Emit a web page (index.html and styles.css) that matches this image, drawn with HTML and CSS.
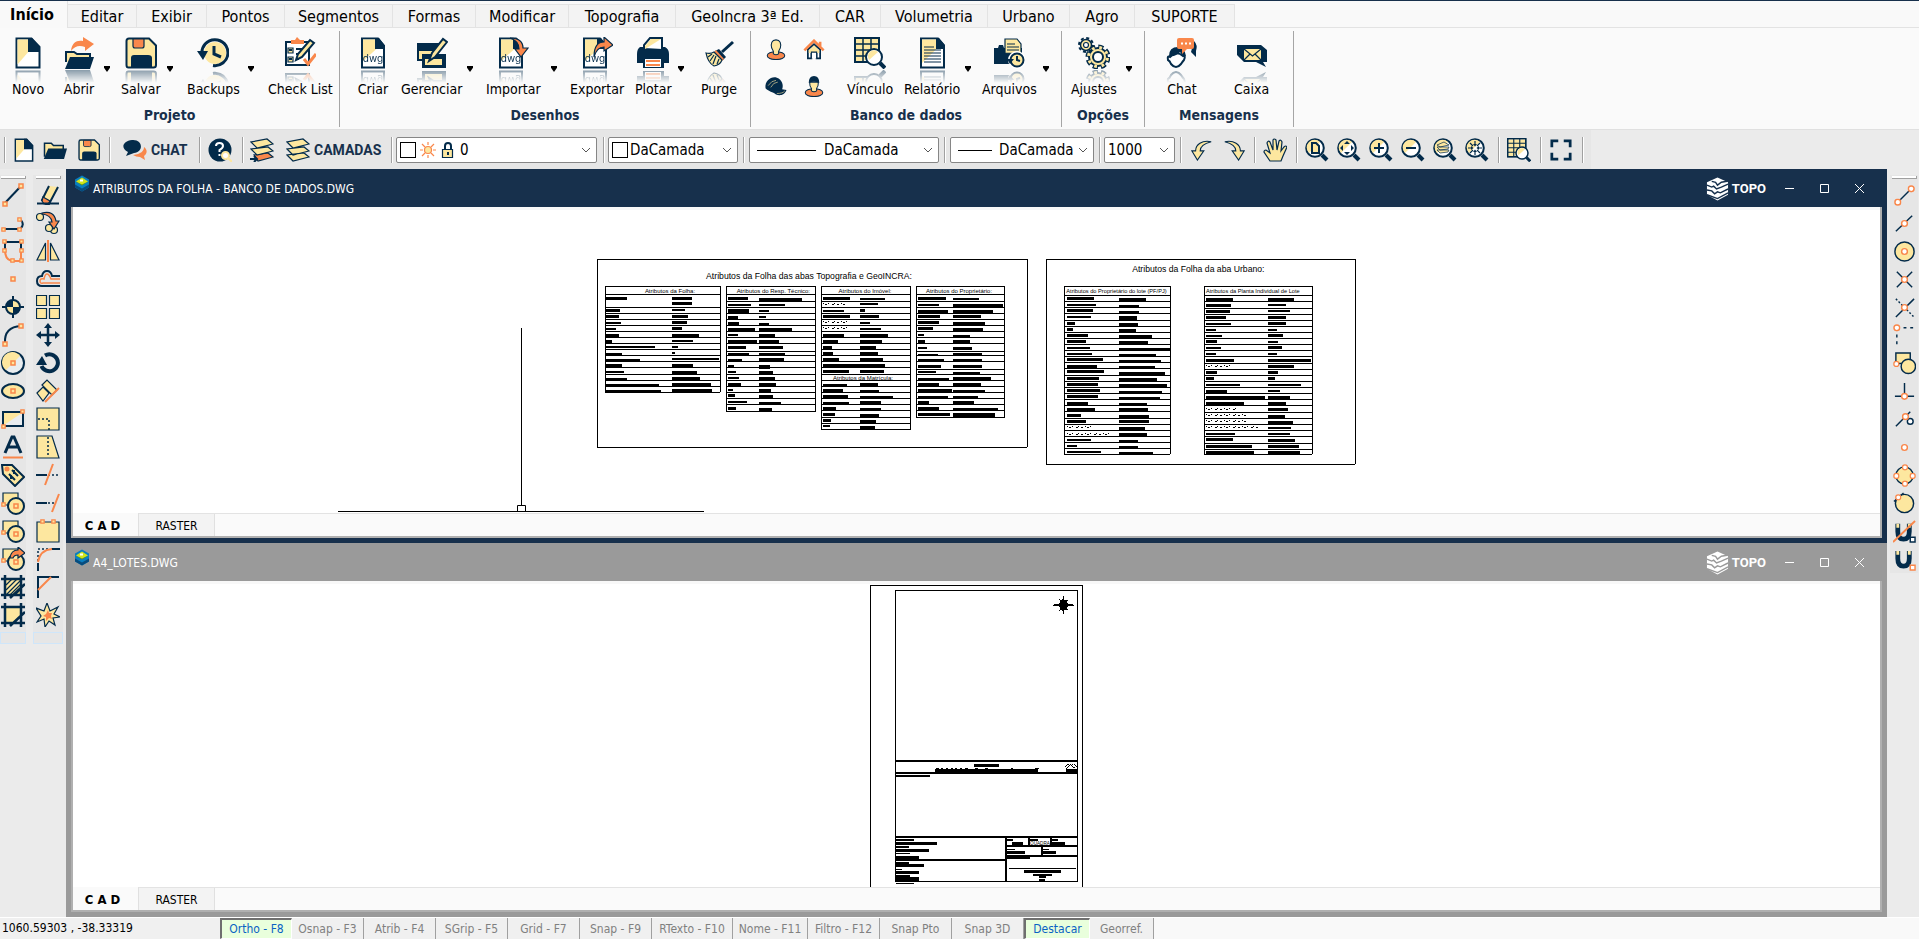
FILE: index.html
```html
<!DOCTYPE html>
<html lang="pt-BR">
<head>
<meta charset="utf-8">
<title>TOPO</title>
<link rel="stylesheet" href="styles.css">
</head>
<body>
<svg class="sprite" aria-hidden="true">
  <symbol id="doc" viewBox="0 0 32 32"><path class="w sn s2" d="M4.500 1.500h15l8 8.500v20.500h-23z"/><path class="y" d="M5.500 2.500h12v11l-12 14z"/><path class="n" d="M16 1h4l8 9v5H16z"/></symbol>
  <symbol id="folder" viewBox="0 0 32 32"><path class="y sn s2" d="M2 25V7h9l3 3h13v6"/><path class="n" d="M7 14h25l-4 14H1z"/></symbol>
  <symbol id="open" viewBox="0 0 32 32"><path class="o" d="M8 14C9 5 14 3 20 4V0l11 7-9 7v-4C16 8 12 9 8 14z"/><path class="y sn s2" d="M3 25V15h8l3 2h13v4"/><path class="n" d="M7 20h24l-4 12H2z"/></symbol>
  <symbol id="save" viewBox="0 0 32 32"><path class="y sn s2" d="M4 1.500h20l7 7V28q0 2.500-2.500 2.500h-25Q1.500 30.500 1.500 28V4q0-2.500 2.500-2.500z"/><path class="o sn s1" d="M8 2h11v7q0 2-2 2h-7q-2 0-2-2z"/><path class="n" d="M6 31V21q0-3 3-3h14q4 0 4 3v10z"/></symbol>
  <symbol id="clock" viewBox="0 0 32 32"><circle class="y" cx="18" cy="16" r="11"/><path class="f sn s3" d="M5 17A13 13 0 1 1 16 28.500"/><path class="n" d="M0 14h11l-5 9z"/><path class="f sn s3" d="M17 9v8l7 3"/></symbol>
  <symbol id="check" viewBox="0 0 32 32"><path class="w sn s2" d="M2 5h23v23H2z"/><path class="o" d="M7 7V3h4l2-3 3 3h4v4z"/><path class="y sn s1" d="M4 11h5v5H4zM4 20h5v5H4z"/><path class="f sn s2" d="M12 12h7M12 17h4M12 22h3M5 13h3M5 22h3"/><path class="y sn s2" d="M12 23l2-6L26 3l4 3-12 14z"/><path class="f so s3" d="M20 22l4 5 8-10"/></symbol>
  <symbol id="dwg" viewBox="0 0 32 32"><path class="w sn s2" d="M5 1.500h16l6 7v22H5z"/><path class="y" d="M6 2.500h14v9L6 24z"/><path class="n" d="M18 1h4l6 8v3H18z"/><text class="dwgt" x="16" y="25">dwg</text></symbol>
  <symbol id="imp" viewBox="0 0 32 32"><use href="#dwg" width="32" height="32" x="-2"/><path class="o sn s1" d="M13 1c9 0 13 4 13 10h5l-7 9-6-8h4c0-6-3-9-9-11z"/></symbol>
  <symbol id="exp" viewBox="0 0 32 32"><use href="#dwg" width="32" height="32" x="-2"/><path class="o sn s1" d="M13 20C13 9 17 5 23 5V0l9 8-9 6v-4c-5 0-8 3-10 10z"/></symbol>
  <symbol id="manage" viewBox="0 0 32 32"><path class="n" d="M1 6h22v8H1z"/><path class="y sn s2" d="M2 13h18v10H2z"/><path class="n" d="M6 17h24v14H6z"/><path class="y" d="M9 22h17v6H9z"/><path class="y sn s2" d="M13 24l3-8L27 2l4 3-12 15z"/></symbol>
  <symbol id="print" viewBox="0 0 32 32"><path class="w sn s2" d="M7 12V8l6-7h12v12z"/><path class="y" d="M8 12V9l6-7h10z"/><path class="n" d="M3 10h5v3h16v-3h4q4 2 4 7v9h-5v5H6v-5H0v-9q0-5 3-7z"/><path class="w" d="M8 22h16v8H8z"/><path class="f so s2" d="M9 24h14M9 28h14"/></symbol>
  <symbol id="broom" viewBox="0 0 32 32"><path class="f sn s3" d="M30 5L19 15"/><path class="n" d="M16 12l7 8-3 3-8-9z"/><path class="o" d="M13 13l8 9-2 2-8-9z"/><path class="y sn s1" d="M11 15l8 8q-2 5-8 6Q5 26 3 16q5 1 8-1z"/><path class="f sn s1" d="M5 20l4-3M7 24l4-6M10 27l3-8M14 27l2-5"/></symbol>
  <symbol id="user" viewBox="0 0 24 24"><ellipse class="o sn s1" cx="12" cy="19" rx="10" ry="4.500"/><path class="y sn s1" d="M12 1c5 0 6 4 5 9l-2 4v3q-3 2-6 0v-3l-2-4c-1-5 0-9 5-9z"/></symbol>
  <symbol id="house" viewBox="0 0 24 24"><path class="w sn s2" d="M5 22V12l7-6 7 6v10h-4v-6H9v6z"/><path class="y" d="M6 13l6-6 6 6v3H6z"/><path class="w sn s1" d="M9 22v-7h6v7"/><path class="f so s3" d="M1 13L12 2l11 11M19 3v5"/></symbol>
  <symbol id="cap" viewBox="0 0 24 24"><path class="n" d="M0 14C-1 5 7 0 13 2c6 2 8 9 6 13l5 1c-2 6-8 7-12 5C8 18 4 18 0 14z"/><path class="f sy s05" d="M3 11Q7 5 12 5M6 13q3-6 8-6M13 20q7 0 9-3"/></symbol>
  <symbol id="worker" viewBox="0 0 24 24"><ellipse class="o sn s1" cx="12" cy="19" rx="10" ry="4.500"/><path class="y sn s1" d="M7 7h10q0 5-2 7v3q-3 2-6 0v-3q-2-2-2-7z"/><path class="n" d="M6 8Q6 0 12 0t6 8q-6-3-12 0z"/></symbol>
  <symbol id="table" viewBox="0 0 32 32"><path class="w sn s2" d="M1 1h24v24H1z"/><path class="y" d="M2 2h22v9L10 24H2z"/><path class="f sn s15" d="M1 7h24M1 13h24M1 19h24M9 1v24M17 1v24M1 1h24v24H1z"/><path class="f sn s4" d="M26 26l5 5"/><circle class="w sn s2" cx="20" cy="20" r="8"/><path class="y" d="M14 20a6 6 0 0 1 10-5l-9 8z"/></symbol>
  <symbol id="report" viewBox="0 0 32 32"><path class="w sn s2" d="M5 1.500h17l6 7v22H5z"/><path class="y" d="M6 2.500h15v9L6 26z"/><path class="n" d="M20 1h3l6 7v4h-9z"/><path class="f sn s1" d="M8 13h17M8 16h17M8 19h17M8 22h17M8 25h17M8 10h10"/></symbol>
  <symbol id="files" viewBox="0 0 32 32"><path class="n" d="M1 11h4l1-3h4l1 3h18v16H1z"/><path class="y sn s1" d="M12 16V2h12l4 5v10z"/><path class="f sn s1" d="M14 7h8M14 10h12M14 13h12"/><circle class="w" cx="24" cy="23" r="9"/><circle class="y sn s2" cx="24" cy="23" r="6.500"/><path class="f sn s2" d="M24 19v4l3 1"/><path class="n" d="M14 22h7l-4 5z"/></symbol>
  <symbol id="gears" viewBox="0 0 32 32"><circle class="f sn s2 tooth" cx="8" cy="8" r="7"/><circle class="y sn s15" cx="8" cy="8" r="5.500"/><circle class="w sn s1" cx="8" cy="8" r="2.500"/><circle class="f sn gear" cx="20" cy="20" r="10"/><circle class="y sn s2" cx="20" cy="20" r="9"/><circle class="f sy gear2" cx="20" cy="20" r="9.500"/><circle class="w sn s2" cx="20" cy="20" r="5"/></symbol>
  <symbol id="talk" viewBox="0 0 32 32"><path class="n" d="M28 4q4 4 2 10v6l-5-5z"/><path class="w sn s2" d="M4 20q-3-2-2 3 2 1 3 4 5 6 10 0 2-3 3-4 2-5-1-4-7-6-13 1z"/><path class="n" d="M3 19Q3 10 12 10q7 1 8 9-4 0-6-4-4 5-11 4z"/><path class="o" d="M13 1h13q2 0 2 2v7q0 2-2 2h-5l-5 5v-5h-3q-2 0-2-2V3q0-2 2-2z"/><path class="f sw dots" d="M15 6.500h10"/></symbol>
  <symbol id="mail" viewBox="0 0 32 32"><path class="n" d="M1 8h24l6 5v12h-4l3 5-10-5H8l-7-7z"/><path class="y" d="M8 12h17v11H8z"/><path class="f sn s1" d="M8 12l8.500 7 8.500-7M8 23l6-6M25 23l-6-6"/></symbol>

  <symbol id="bubbles" viewBox="0 0 24 24"><path class="n" d="M9 2c11-1 12 12 2 13l-8 3 2-4C-3 10 0 3 9 2z"/><path class="o" d="M21 9c4 3 3 7 0 9l1 4-5-3q-4 0-7-2c8-1 11-4 11-8z"/></symbol>
  <symbol id="help" viewBox="0 0 24 24"><circle class="n" cx="12" cy="12" r="11.500"/><path class="f sw s2" d="M8 8q0-3 3.500-3T15 8q0 2-3.500 4v2M11.500 16v2"/><circle class="w sy s2" cx="17.500" cy="17.500" r="3.500"/><path class="f sy s2" d="M20 20l4 4"/></symbol>
  <symbol id="layers" viewBox="0 0 24 24"><path class="y sn s1" d="M1 17l6 6 16-4-5-4zM1 11l6 6 16-4-5-4zM1 4l6 6 16-4-6-5z"/></symbol>
  <symbol id="layersel" viewBox="0 0 24 24"><path class="o sn s1" d="M4 17l4 6 15-4-5-4z"/><path class="y sn s1" d="M1 11l6 6 16-4-5-4zM1 4l6 6 16-4-6-5z"/><path class="f sn s2" d="M0 21h6M4 18l3 3-3 3"/></symbol>
  <symbol id="sun" viewBox="0 0 16 16"><circle class="y so s1" cx="8" cy="8" r="3.500"/><path class="f so s1" d="M8 0v3M8 13v3M0 8h3M13 8h3M2 2l3 3M11 11l3 3M14 2l-3 3M5 11l-3 3"/></symbol>
  <symbol id="lock" viewBox="0 0 16 16"><path class="f sn s2" d="M5 8V4q0-3 3-3t3 3v3"/><path class="y sn s1" d="M2.500 7.500h10v8h-10z"/><path class="n" d="M7 10h2v3H7z"/></symbol>
  <symbol id="chev" viewBox="0 0 10 10"><path d="M1 3l4 4 4-4" fill="none" stroke="#555"/></symbol>
  <symbol id="undo" viewBox="0 0 24 24"><path class="y sn s1" d="M22 3C12 1 5 6 5 13H1l6 10 7-10h-4c0-5 4-8 12-10z"/></symbol>
  <symbol id="redo" viewBox="0 0 24 24"><path class="y sn s1" d="M2 3c10-2 17 3 17 10h4l-6 10-7-10h4c0-5-4-8-12-10z"/></symbol>
  <symbol id="hand" viewBox="0 0 24 24"><path class="y sn s1" d="M7 23L1 14q0-2 2-2l4 3L4 5q1-3 3-1l3 8V2q1-2 3 0l1 10 2-9q2-2 3 1l-1 9 3-4q2-2 3 0l-4 9-2 5z"/></symbol>
  <symbol id="lens" viewBox="0 0 24 24"><path class="f sn s4" d="M17 17l5 5"/><circle class="w sn s2" cx="10" cy="10" r="8.800"/><path class="y" d="M4 15A7.600 7.600 0 0 1 15 4z"/></symbol>
  <symbol id="zdoc" viewBox="0 0 24 24"><use href="#lens" width="24" height="24"/><path class="y sn s2" d="M7 5h4l3 3v7H7z"/></symbol>
  <symbol id="zext" viewBox="0 0 24 24"><use href="#lens" width="24" height="24"/><path class="n" d="M10 3l3 3H7zM10 17l3-3H7zM3 10l3-3v6zM17 10l-3-3v6z"/></symbol>
  <symbol id="zin" viewBox="0 0 24 24"><use href="#lens" width="24" height="24"/><path class="f sn s2" d="M5 10h10M10 5v10"/></symbol>
  <symbol id="zout" viewBox="0 0 24 24"><use href="#lens" width="24" height="24"/><path class="f sn s2" d="M5 10h10"/></symbol>
  <symbol id="zlay" viewBox="0 0 24 24"><use href="#lens" width="24" height="24"/><path class="y sn s05" d="M4 12l3 3 8-1 1-2zM4 9l3 3 8-1 1-2zM4 7l3 2 9-2-5-3z"/></symbol>
  <symbol id="zcen" viewBox="0 0 24 24"><use href="#lens" width="24" height="24"/><path class="f sn s1" d="M10 3v4M10 13v4M3 10h4M13 10h4M5 5l3 3M15 5l-3 3M5 15l3-3M15 15l-3-3"/><path class="n" d="M10 8.500L8 6h4zM10 11.500L8 14h4zM8.500 10L6 8v4zM11.500 10L14 8v4z"/></symbol>
  <symbol id="full" viewBox="0 0 24 24"><path class="f sn s3" d="M2 9V2h7M15 2h7v7M22 15v7h-7M9 22H2v-7"/></symbol>

  <symbol id="hs" viewBox="0 0 6 6"><path class="y so s15" d="M1 1h4v4H1z"/></symbol>
  <symbol id="hr" viewBox="0 0 8 8"><circle class="w so s15" cx="4" cy="4" r="3"/></symbol>
  <symbol id="line" viewBox="0 0 24 24"><path class="f sn s2" d="M4 20L20 3"/><use href="#hs" x="1" y="18" width="6" height="6"/><use href="#hs" x="17" y="0" width="6" height="6"/></symbol>
  <symbol id="pline" viewBox="0 0 24 24"><path class="f sn s2" d="M3 18h16q5-4 1-9"/><use href="#hs" x="0" y="16" width="5" height="5"/><use href="#hs" x="16" y="16" width="5" height="5"/><use href="#hs" x="16" y="6" width="5" height="5"/></symbol>
  <symbol id="poly" viewBox="0 0 24 24"><path class="f so s2" d="M4 11q0 11 9 11h7V11"/><path class="f sn s2" d="M4 11V3h16v8"/><use href="#hs" x="1" y="0" width="5" height="5"/><use href="#hs" x="18" y="0" width="5" height="5"/><use href="#hs" x="1" y="9" width="5" height="5"/><use href="#hs" x="18" y="9" width="5" height="5"/><use href="#hs" x="18" y="19" width="5" height="5"/><use href="#hs" x="9" y="19" width="5" height="5"/></symbol>
  <symbol id="point" viewBox="0 0 24 24"><use href="#hs" x="9" y="9" width="6" height="6"/></symbol>
  <symbol id="target" viewBox="0 0 24 24"><path class="f sn s2" d="M12 1v22M1 12h22"/><circle class="y sn s2" cx="12" cy="12" r="7"/><path class="n" d="M12 12V5a7 7 0 0 0-7 7zM12 12v7a7 7 0 0 0 7-7z"/></symbol>
  <symbol id="arc" viewBox="0 0 24 24"><path class="f sn s2" d="M4 20Q3 4 20 3"/><use href="#hs" x="1" y="18" width="6" height="6"/><use href="#hs" x="17" y="0" width="6" height="6"/></symbol>
  <symbol id="circle" viewBox="0 0 24 24"><circle class="lt sn s2" cx="12" cy="12" r="11"/><path class="y" d="M5 19A10 10 0 1 1 19 5z"/><use href="#hs" x="9" y="9" width="6" height="6"/></symbol>
  <symbol id="ellipse" viewBox="0 0 24 24"><ellipse class="y sn s2" cx="12" cy="12" rx="11" ry="7"/><use href="#hs" x="9" y="9" width="6" height="6"/></symbol>
  <symbol id="rect" viewBox="0 0 24 24"><path class="lt sn s2" d="M2 5h20v14H2z"/><path class="y" d="M3 6h18L3 18z"/><use href="#hs" x="0" y="17" width="5" height="5"/><use href="#hs" x="19" y="2" width="5" height="5"/></symbol>
  <symbol id="text" viewBox="0 0 24 24"><path class="f sn s3" d="M4 18L11 2h2l7 16M7 12h10"/><path class="f so s2" d="M2 22.500h20"/></symbol>
  <symbol id="tag" viewBox="0 0 24 24"><path class="y sn s2" d="M1 2l10 0 12 12-9 9L2 11z"/><circle class="o" cx="6" cy="6" r="2.500"/><path class="f sn s2" d="M11 7l6 6M8 11l6 6M13 7v4M10 12v4"/></symbol>
  <symbol id="shapes" viewBox="0 0 24 24"><path class="y sn s1" d="M2 2h15v12H2z"/><use href="#hs" x="0" y="11" width="5" height="5"/><circle class="y sn s2" cx="15" cy="15" r="8"/><use href="#hs" x="12" y="12" width="6" height="6"/></symbol>
  <symbol id="shapes2" viewBox="0 0 24 24"><use href="#shapes" width="24" height="24"/><path class="o sn s1" d="M9 11q1-8 8-8V0l7 6-7 5V8q-4 0-5 3z"/></symbol>
  <symbol id="hatch" viewBox="0 0 24 24"><path class="y" d="M5 4h16v15l-2 2H5z"/><path class="f sn s1" d="M5 10l6-6M5 15L16 4M5 20L20 5M9 20L20 9M14 20l6-6"/><path class="f sn s25" d="M4 0v24M20 0v24M0 4h24M0 20h24M24 9L9 23"/></symbol>
  <symbol id="bound" viewBox="0 0 24 24"><path class="y" d="M5 4h16v7l-9 9H5z"/><path class="f sn s25" d="M4 0v24M20 0v24M0 4h24M0 20h24M24 9L9 23"/></symbol>

  <symbol id="erase" viewBox="0 0 24 24"><path class="y sn s2" d="M13 3L6 17l4 4h3L22 4"/><path class="o sn s1" d="M7 14l7 4-2 3H8l-2-3z"/><path class="f sn s2" d="M1 20.500h22"/></symbol>
  <symbol id="copy" viewBox="0 0 24 24"><circle class="y sn s1" cx="4" cy="6" r="3.500"/><circle class="y sn s1" cx="18" cy="19" r="3.500"/><circle class="y sn s1" cx="13" cy="17" r="3.500"/><path class="o sn s1" d="M6 2q12-3 14 8h3l-5 8-5-7h3Q15 4 6 3z"/></symbol>
  <symbol id="mirror" viewBox="0 0 24 24"><path class="y sn s1" d="M9.500 4v17H1zM14.500 4v17H23z"/><path class="f so s2" d="M12 1v22"/></symbol>
  <symbol id="offset" viewBox="0 0 24 24"><path class="f sn s2" d="M24 9h-8q-1-5-5-5T6 9q-5 0-5 5t5 5h18"/><path class="f so s15" d="M24 12h-9q-2-5-4-5t-3 5q-4-1-4 2t3 2h17"/></symbol>
  <symbol id="array" viewBox="0 0 24 24"><path class="y sn s1" d="M.5.5h10v10H.5zM13.500.5h10v10h-10zM.5 13.500h10v10H.5zM13.500 13.500h10v10h-10z"/></symbol>
  <symbol id="move" viewBox="0 0 24 24"><path class="f sn s25" d="M12 3v18M3 12h18"/><path class="n" d="M12 0l4 5H8zM12 24l4-5H8zM0 12l5-4v8zM24 12l-5-4v8z"/></symbol>
  <symbol id="rotate" viewBox="0 0 24 24"><path class="f sn s4" d="M9 4.500A8.500 8.500 0 1 1 5.500 15"/><path class="n" d="M0 14h11L6 5z"/></symbol>
  <symbol id="align" viewBox="0 0 24 24"><path class="y sn s1" d="M6 6l5-5 10 10-5 5zM1 14l6-6 6 6-6 8z"/><path class="f so s2" d="M9 23L23 9"/></symbol>
  <symbol id="scale" viewBox="0 0 24 24"><path class="y sn s1" d="M1 1h22v22H1z"/><path class="f sn s15 dash" d="M2 12h11v11"/></symbol>
  <symbol id="stretch" viewBox="0 0 24 24"><path class="y sn s1" d="M1 1h15l7 22H1z"/><path class="f sn s15 dash" d="M12 2v20"/></symbol>
  <symbol id="trim" viewBox="0 0 24 24"><path class="f sn s2" d="M0 12h11"/><path class="f sn s15 dash" d="M12 12h12"/><path class="f so s2" d="M17 1L9 22"/></symbol>
  <symbol id="extend" viewBox="0 0 24 24"><path class="f sn s2" d="M0 12h11"/><path class="f sn s15 dash" d="M12 12h8"/><path class="f so s2" d="M23 3l-7 18"/></symbol>
  <symbol id="break" viewBox="0 0 24 24"><path class="y sn s1" d="M1 3h22v20H1z"/><use href="#hs" x="4" y="0" width="5" height="5"/><use href="#hs" x="15" y="0" width="5" height="5"/></symbol>
  <symbol id="fillet" viewBox="0 0 24 24"><path class="f sn s15 dash" d="M2 14V2h12"/><path class="f sn s2" d="M2 24v-8M15 2h9"/><path class="f so s2" d="M2 15Q4 3 16 2"/></symbol>
  <symbol id="chamfer" viewBox="0 0 24 24"><path class="f sn s2" d="M2 23V2h21"/><path class="f so s2" d="M2 15L15 2"/></symbol>
  <symbol id="explode" viewBox="0 0 24 24"><path class="y sn s1" d="M11 0l3 8 8-4-4 7 6 3-7 1 2 7-6-4-4 6-1-8-7 3 4-6-5-8 8 3z"/><path class="o" d="M12 7l1 3 3 0-1 3 1 3-3-1-3 3 0-4-3-1 3-2z"/></symbol>

  <symbol id="oend" viewBox="0 0 24 24"><path class="f sn s15" d="M5 19L19 5"/><use href="#hr" x="1" y="15" width="8" height="8"/><use href="#hr" x="15" y="1" width="8" height="8"/></symbol>
  <symbol id="omid" viewBox="0 0 24 24"><path class="f sn s15" d="M3 20L20 4"/><use href="#hr" x="8" y="8" width="8" height="8"/></symbol>
  <symbol id="ocen" viewBox="0 0 24 24"><circle class="y sn s15" cx="12" cy="12" r="10"/><use href="#hr" x="8" y="8" width="8" height="8"/></symbol>
  <symbol id="oint" viewBox="0 0 24 24"><path class="f sn s15" d="M4 20L20 4M4 4l16 16"/><use href="#hr" x="8" y="8" width="8" height="8"/></symbol>
  <symbol id="oapp" viewBox="0 0 24 24"><path class="f sn s15" d="M3 22L22 3"/><path class="f sn s15 dash" d="M3 3l19 19"/><use href="#hr" x="8" y="8" width="8" height="8"/></symbol>
  <symbol id="oext" viewBox="0 0 24 24"><path class="f sn s15 dash wide" d="M4 4h20M4 4v20"/><use href="#hr" x="0" y="0" width="8" height="8"/></symbol>
  <symbol id="oins" viewBox="0 0 24 24"><path class="y sn s15" d="M3 1h15v11H3z"/><circle class="y sn s15" cx="16" cy="15" r="7.500"/><use href="#hr" x="0" y="9" width="7" height="7"/></symbol>
  <symbol id="oper" viewBox="0 0 24 24"><path class="f sn s15" d="M12 3v14M2 17h20"/><use href="#hr" x="8" y="13" width="8" height="8"/></symbol>
  <symbol id="onea" viewBox="0 0 24 24"><path class="f sn s15" d="M3 19L18 4"/><circle class="w sn s15" cx="18" cy="14" r="3"/><use href="#hr" x="9" y="5" width="8" height="8"/></symbol>
  <symbol id="onod" viewBox="0 0 24 24"><use href="#hr" x="8" y="8" width="8" height="8"/></symbol>
  <symbol id="oqua" viewBox="0 0 24 24"><circle class="y sn s15" cx="12" cy="12" r="9"/><use href="#hr" x="9" y="0" width="7" height="7"/><use href="#hr" x="9" y="17" width="7" height="7"/><use href="#hr" x="0" y="9" width="7" height="7"/><use href="#hr" x="17" y="9" width="7" height="7"/></symbol>
  <symbol id="otan" viewBox="0 0 24 24"><circle class="y sn s15" cx="12" cy="12" r="9.500"/><path class="f sn s15" d="M1 10L11 1"/><use href="#hr" x="2" y="2" width="7" height="7"/></symbol>
  <symbol id="mag" viewBox="0 0 24 24"><path class="f sn s5" d="M6 2v8q0 8 6 8t6-8V2"/><path class="y" d="M4.500 2h3v4h-3zM16.500 2h3v4h-3z"/></symbol>
  <symbol id="magoff" viewBox="0 0 24 24"><use href="#mag" width="24" height="24" x="-1" y="2"/><path class="f so s2" d="M0 23L23 1"/><path class="w sn s15" d="M18 18h5v5h-5z"/></symbol>
  <symbol id="magon" viewBox="0 0 24 24"><use href="#mag" width="24" height="24" x="-1" y="1"/><path class="w so s15" d="M18 18h5v5h-5z"/></symbol>
  <symbol id="app" viewBox="0 0 16 16"><path fill="#0a7fc0" d="M8 0l7 4v8l-7 4-7-4V4z"/><path fill="#084c7d" d="M1 9l7 4 7-4v3l-7 4-7-4z"/><path fill="#5f8f10" d="M2 6l6 4 6-4-3 1H5z"/><path fill="#cfe51c" d="M8 2l6 4-6 3-6-3z"/><path fill="#fff" d="M6 4h3v2H6z"/></symbol>
  <symbol id="topo" viewBox="0 0 24 24"><path class="w" d="M12 0l11 5v13l-11 6-11-6V5z"/><path d="M1 8l5 2 2-1 3 3 5-2 7-3M1 13l5 1 3 3 3-2 3 1 8-4M1 18l11 4 11-6M6 4l4 1 2 3 4-3 6-1" fill="none" stroke="currentColor" stroke-width="1.500"/></symbol>
</svg>

<nav class="tabs" aria-label="Menu">
  <button class="tab on">Início</button><button class="tab">Editar</button><button class="tab">Exibir</button><button class="tab">Pontos</button><button class="tab">Segmentos</button><button class="tab">Formas</button><button class="tab">Modificar</button><button class="tab">Topografia</button><button class="tab">GeoIncra 3ª Ed.</button><button class="tab">CAR</button><button class="tab">Volumetria</button><button class="tab">Urbano</button><button class="tab">Agro</button><button class="tab">SUPORTE</button>
</nav>

<section class="ribbon">
  <div class="group"><div class="tools g1">
    <button class="tool"><svg><use href="#doc"/></svg>Novo</button>
    <button class="tool"><svg><use href="#open"/></svg>Abrir</button><button class="drop" aria-label="Mais"></button>
    <button class="tool"><svg><use href="#save"/></svg>Salvar</button><button class="drop" aria-label="Mais"></button>
    <button class="tool"><svg><use href="#clock"/></svg>Backups</button><button class="drop" aria-label="Mais"></button>
    <button class="tool"><svg><use href="#check"/></svg>Check List</button>
  </div><h2>Projeto</h2></div>
  <div class="group"><div class="tools g2">
    <button class="tool"><svg><use href="#dwg"/></svg>Criar</button>
    <button class="tool"><svg><use href="#manage"/></svg>Gerenciar</button><button class="drop" aria-label="Mais"></button>
    <button class="tool"><svg><use href="#imp"/></svg>Importar</button><button class="drop" aria-label="Mais"></button>
    <button class="tool"><svg><use href="#exp"/></svg>Exportar</button>
    <button class="tool"><svg><use href="#print"/></svg>Plotar</button><button class="drop" aria-label="Mais"></button>
    <button class="tool"><svg><use href="#broom"/></svg>Purge</button>
  </div><h2>Desenhos</h2></div>
  <div class="group"><div class="tools g3">
    <div class="minis">
      <button aria-label="Proprietário"><svg><use href="#user"/></svg></button><button aria-label="Imóvel"><svg><use href="#house"/></svg></button>
      <button aria-label="Responsável"><svg><use href="#cap"/></svg></button><button aria-label="Equipe"><svg><use href="#worker"/></svg></button>
    </div>
    <button class="tool"><svg><use href="#table"/></svg>Vínculo</button>
    <button class="tool"><svg><use href="#report"/></svg>Relatório</button><button class="drop" aria-label="Mais"></button>
    <button class="tool"><svg><use href="#files"/></svg>Arquivos</button><button class="drop" aria-label="Mais"></button>
  </div><h2>Banco de dados</h2></div>
  <div class="group"><div class="tools g4">
    <button class="tool"><svg><use href="#gears"/></svg>Ajustes</button><button class="drop" aria-label="Mais"></button>
  </div><h2>Opções</h2></div>
  <div class="group"><div class="tools g5">
    <button class="tool"><svg><use href="#talk"/></svg>Chat</button>
    <button class="tool"><svg><use href="#mail"/></svg>Caixa</button>
  </div><h2>Mensagens</h2></div>
</section>

<div class="quick"><div class="bar">
  <i class="sep"></i>
  <button aria-label="Novo"><svg><use href="#doc"/></svg></button>
  <button aria-label="Abrir"><svg><use href="#folder"/></svg></button>
  <button class="sm" aria-label="Salvar"><svg><use href="#save"/></svg></button>
  <i class="sep"></i>
  <button class="word"><svg><use href="#bubbles"/></svg>CHAT</button>
  <i class="sep"></i>
  <button aria-label="Ajuda"><svg><use href="#help"/></svg></button>
  <i class="sep"></i>
  <button aria-label="Camada atual"><svg><use href="#layersel"/></svg></button>
  <button class="word"><svg><use href="#layers"/></svg>CAMADAS</button>
  <i class="sep"></i>
  <label class="combo c1"><i class="swatch"></i><svg><use href="#sun"/></svg><svg><use href="#lock"/></svg><select aria-label="Camada"><option>0</option></select><svg class="chev"><use href="#chev"/></svg></label>
  <i class="sep"></i>
  <label class="combo c2"><i class="swatch"></i><select aria-label="Cor"><option>DaCamada</option></select><svg class="chev"><use href="#chev"/></svg></label>
  <i class="sep"></i>
  <label class="combo c3"><i class="stroke"></i><select aria-label="Tipo de linha"><option>DaCamada</option></select><svg class="chev"><use href="#chev"/></svg></label>
  <i class="sep"></i>
  <label class="combo c4"><i class="stroke"></i><select aria-label="Espessura"><option>DaCamada</option></select><svg class="chev"><use href="#chev"/></svg></label>
  <i class="sep"></i>
  <label class="combo c5"><select aria-label="Escala"><option>1000</option></select><svg class="chev"><use href="#chev"/></svg></label>
  <i class="sep"></i>
  <button class="sm" aria-label="Desfazer"><svg><use href="#undo"/></svg></button>
  <button class="sm" aria-label="Refazer"><svg><use href="#redo"/></svg></button>
  <i class="sep"></i>
  <button aria-label="Mover vista"><svg><use href="#hand"/></svg></button>
  <i class="sep"></i>
  <button aria-label="Zoom folha"><svg><use href="#zdoc"/></svg></button>
  <button aria-label="Zoom extensão"><svg><use href="#zext"/></svg></button>
  <button aria-label="Mais zoom"><svg><use href="#zin"/></svg></button>
  <button aria-label="Menos zoom"><svg><use href="#zout"/></svg></button>
  <button aria-label="Zoom camada"><svg><use href="#zlay"/></svg></button>
  <button aria-label="Zoom centro"><svg><use href="#zcen"/></svg></button>
  <i class="sep"></i>
  <button aria-label="Tabela"><svg><use href="#table"/></svg></button>
  <i class="sep"></i>
  <button class="sm" aria-label="Tela cheia"><svg><use href="#full"/></svg></button>
  <i class="sep"></i>
</div></div>

<main class="work">
  <aside class="side left">
    <div class="strip" data-icons="line pline poly point target arc circle ellipse rect text tag shapes shapes shapes2 hatch bound"><i class="grip"></i></div>
    <div class="strip" data-icons="erase copy mirror offset array move rotate align scale stretch trim extend break fillet chamfer explode"><i class="grip"></i></div>
  </aside>
  <div class="mdi">
    <section class="win active">
      <header><svg class="app"><use href="#app"/></svg><h1>ATRIBUTOS DA FOLHA - BANCO DE DADOS.DWG</h1><span class="brand"><svg><use href="#topo"/></svg>TOPO</span>
        <button aria-label="Minimizar"><svg viewBox="0 0 9 9"><path d="M0 4.500h9"/></svg></button><button aria-label="Maximizar"><svg viewBox="0 0 9 9"><path d="M.5.5h8v8h-8z"/></svg></button><button aria-label="Fechar"><svg viewBox="0 0 9 9"><path d="M0 0l9 9M9 0L0 9"/></svg></button></header>
      <div class="body">
        <svg class="canvas">
          <g transform="translate(-73 -210)">
            <path class="ln" d="M521.500 328v177M338 511.500h366"/><path class="ln" d="M517.500 505.500h8v6h-8z"/>
            <g id="sheet1" class="cad" transform="translate(590 250) scale(.333333)">
              <text x="657" y="86" class="t1">Atributos da Folha das abas Topografia e GeoINCRA:</text>
              <text x="240" y="129">Atributos da Folha:</text><text x="550" y="129">Atributos do Resp. Técnico:</text><text x="825" y="129">Atributos do Imóvel:</text><text x="1107" y="129">Atributos do Proprietário:</text><text x="819" y="391">Atributos da Matrícula:</text>
            </g>
            <g id="sheet2" class="cad" transform="translate(1030 250) scale(.333333)">
              <text x="505" y="65" class="t1">Atributos da Folha da aba Urbano:</text>
              <text x="109" y="129" class="ts">Atributos do Proprietário do lote (PF/PJ)</text><text x="528" y="129" class="ts">Atributos da Planta Individual de Lote</text>
            </g>
          </g>
        </svg>
        <div class="views"><button class="on">C A D</button><button>RASTER</button></div>
      </div>
    </section>
    <section class="win">
      <header><svg class="app"><use href="#app"/></svg><h1>A4_LOTES.DWG</h1><span class="brand"><svg><use href="#topo"/></svg>TOPO</span>
        <button aria-label="Minimizar"><svg viewBox="0 0 9 9"><path d="M0 4.500h9"/></svg></button><button aria-label="Maximizar"><svg viewBox="0 0 9 9"><path d="M.5.5h8v8h-8z"/></svg></button><button aria-label="Fechar"><svg viewBox="0 0 9 9"><path d="M0 0l9 9M9 0L0 9"/></svg></button></header>
      <div class="body">
        <svg class="canvas">
          <g transform="translate(-73 -584)"><g id="sheet3" class="cad" transform="translate(860 570) scale(.333333)"><text x="540" y="825" class="tq">QUADRA</text></g></g>
        </svg>
        <div class="views"><button class="on">C A D</button><button>RASTER</button></div>
      </div>
    </section>
  </div>
  <aside class="side right">
    <div class="strip" data-icons="oend omid ocen oint oapp oext oins oper onea onod oqua otan magoff magon"><i class="grip"></i></div>
  </aside>
</main>

<footer class="status">
  <output>1060.59303 , -38.33319</output>
  <button class="on">Ortho - F8</button><button>Osnap - F3</button><button>Atrib - F4</button><button>SGrip - F5</button><button>Grid - F7</button><button>Snap - F9</button><button>RTexto - F10</button><button>Nome - F11</button><button>Filtro - F12</button><button>Snap Pto</button><button>Snap 3D</button><button class="on">Destacar</button><button>Georref.</button>
</footer>
<script src="app.js"></script>
</body>
</html>
```

FILE: styles.css
```css
* { box-sizing: border-box; }
body { margin: 0; height: 100vh; display: flex; flex-direction: column; overflow: hidden; background: #f9f9f9; color: #000; border-top: 1px solid #17304c; font: 14px/18px "DejaVu Sans Condensed", "Noto Sans", sans-serif; }
button, select { font: inherit; color: inherit; background: none; border: 0; padding: 0; margin: 0; white-space: nowrap; }
h1, h2 { margin: 0; font-size: inherit; }
svg { display: block; }
.sprite { display: none; }

.n { fill: #032b4a; } .y { fill: #fde79f; } .o { fill: #f9874b; } .w { fill: #fff; } .lt { fill: #e9edf0; } .f { fill: none; }
.sn { stroke: #032b4a; } .so { stroke: #f9874b; } .sy { stroke: #fde79f; } .sw { stroke: #fff; }
.s05 { stroke-width: 0.7; } .s1 { stroke-width: 1.2; } .s15 { stroke-width: 1.5; } .s2 { stroke-width: 2; } .s25 { stroke-width: 2.5; } .s3 { stroke-width: 3; } .s4 { stroke-width: 4; } .s5 { stroke-width: 5; }
.dash { stroke-dasharray: 2 2; }
.wide { stroke-dasharray: 3 4; }
.dots { stroke-width: 2; stroke-dasharray: 2 2; }
.tooth { stroke-width: 2; stroke-dasharray: 3 2.5; }
.gear { stroke-width: 5; stroke-dasharray: 4.9 2.95; }
.gear2 { stroke-width: 3; stroke-dasharray: 2.7 4.76; stroke-dashoffset: -1; }
.dwgt { font: 10px Inter, sans-serif; text-anchor: middle; fill: #032b4a; }

.tabs { display: grid; grid-template-columns: 68px 69px 70px 78px 108px 83px 93px 107px 144px 61px 107px 82px 65px 100px; height: 27px; padding-top: 3px; border-bottom: 1px solid #e3e3e3; font-size: 16px; flex: none; }
.tab { background: #f3f3f3; border: solid #e3e3e3; border-width: 1px 1px 0 0; padding-top: 1px; }
.tab.on { background: #f9f9f9; border: solid #e3e3e3; border-width: 0 1px 0 0; font-weight: bold; margin: -3px 0 -1px; padding: 0 3px 0 0; }

.ribbon { display: flex; height: 101px; padding: 3px 0 0; background: #fafafa; flex: none; }
.group { border-right: 1px solid #a5a5a5; height: 96px; padding-bottom: 2px; display: flex; flex-direction: column; justify-content: space-between; }
.group h2 { text-align: center; color: #17304c; line-height: 20px; }
.tools { display: grid; justify-items: start; }
.g1 { padding-left: 12px; grid-template-columns: 51px 41px 17px 46px 20px 61px 20px 71px; }
.g2 { padding-left: 17px; grid-template-columns: 44px 66px 19px 65px 19px 65px 43px 23px 49px; }
.g3 { padding-left: 13px; grid-template-columns: 83px 57px 61px 17px 61px 18px; }
.g4 { padding-left: 9px; grid-template-columns: 55px 18px; }
.g5 { padding-left: 21px; grid-template-columns: 68px 59px; }
.tool { display: flex; flex-direction: column; align-items: center; padding-top: 6px; gap: 11px; }
.tool svg { width: 32px; height: 32px; -webkit-box-reflect: below 1px linear-gradient(transparent 60%, rgba(0,0,0,.45)); }
.drop { width: 6px; height: 6px; margin-top: 35px; background: #000; clip-path: polygon(0 0, 100% 0, 100% 30%, 50% 100%, 0 30%); }
.minis { display: grid; grid-template-columns: 38px 24px; gap: 16px 0; padding-top: 8px; align-content: start; }
.minis svg { width: 24px; height: 21px; }

.quick { height: 40px; background: #ebebeb; border-top: 1px solid #e0e0e0; flex: none; }
.bar { display: grid; align-items: center; justify-items: start; width: max-content; height: 100%; padding: 1px 7px 0 4px; background: #e6e6e6;
  grid-template-columns: 8px 31px 35px 31px 14px 76px 9px 34px 8px 36px 105px 5px 207px 5px 135px 6px 195px 6px 149px 5px 76px 11px 32px 31px 9px 33px 9px 32px 32px 32px 32px 32px 33px 9px 33px 10px 32px 2px; }
.bar svg { width: 24px; height: 24px; }
.bar .sm svg { width: 22px; height: 22px; }
.sep { width: 2px; height: 26px; border-left: 1px solid #a0a0a0; background: #fff; }
.word { display: flex; align-items: center; gap: 4px; font: bold 14px/20px Roboto, sans-serif; color: #17304c; }
.combo { display: flex; align-items: center; height: 26px; background: #fff; border: 1px solid #868686; border-radius: 2px; padding: 0 5px 0 3px; gap: 4px; font-size: 15px; }
.combo select { flex: 1; appearance: none; outline: 0; }
.combo svg { width: 16px; height: 16px; }
.combo .chev { width: 10px; height: 10px; }
.c1 { width: 201px; } .c2 { width: 130px; gap: 2px; } .c3 { width: 190px; } .c4 { width: 144px; } .c5 { width: 71px; }
.swatch { width: 16px; height: 16px; border: 1px solid #000; background: #fff; flex: none; }
.stroke { width: 59px; height: 1px; margin: 0 4px; background: #000; flex: none; }
.c4 .stroke { width: 34px; margin: 0 3px 0 4px; }

.work { flex: 1; display: flex; min-height: 0; background: #ebebeb; }
.side { display: flex; gap: 7px; padding-top: 6px; flex: none; align-items: flex-start; }
.left { width: 66px; }
.right { width: 32px; padding-left: 3px; }
.strip { width: 26px; display: flex; flex-direction: column; align-items: center; background: #e6e6e6; }
.strip + .strip, .right .strip { width: 30px; }
.right .strip { width: 28px; }
.strip button { height: 28px; display: grid; place-items: center; }
.strip svg { width: 24px; height: 24px; }
.right .strip svg { width: 23px; height: 23px; }
.left .strip::after { content: ""; align-self: stretch; height: 10px; margin-top: 3px; border: 1px solid #cfe6fa; }
.grip { width: 25px; height: 3px; margin: 1px 0 2px; background: #fff; border: solid #a0a0a0; border-width: 0 1px 1px 0; }

.mdi { flex: 1; min-width: 0; display: flex; flex-direction: column; }
.win { flex: 1; min-height: 0; display: flex; flex-direction: column; background: #9a9a9a; color: #fff; padding: 0 5px 5px; }
.win.active { background: #17304c; }
.win header { height: 38px; display: flex; align-items: center; padding: 1px 5px 0 3px; font-size: 12px; color: #fff; }
.app { width: 16px; height: 17px; margin: 0 3px 10px 0; }
.win h1 { font-weight: normal; flex: 1; }
.brand { display: flex; align-items: center; gap: 3px; font: bold 13px/20px Roboto, sans-serif; margin-right: 6px; }
.brand svg { width: 23px; height: 24px; color: #9a9a9a; }
.active .brand svg { color: #17304c; }
.win header button { width: 35px; height: 30px; display: grid; place-items: center; }
.win header button svg { width: 9px; height: 9px; overflow: visible; fill: none; stroke: #fff; }
.body { flex: 1; min-height: 0; display: flex; flex-direction: column; background: #fff; border: solid #b0b0b0; border-width: 0 2px 2px; color: #000; }
.canvas { flex: 1; min-height: 0; width: 100%; border-top: 3px solid #f8f8f8; overflow: hidden; }
.ln { fill: none; stroke: #000; }
.cad { shape-rendering: crispEdges; }
.cad text { font: 18px "Liberation Sans", Arial, sans-serif; text-anchor: middle; }
.cad .t1 { font-size: 26px; }
.cad .ts { font-size: 17px; text-anchor: start; }
.cad .tq { font-size: 14px; }
.frame { fill: none; stroke: #000; stroke-width: 3; }
.views { height: 23px; display: flex; background: #fafafa; border-top: 1px solid #e3e3e3; font-size: 12px; }
.views button { width: 76px; background: #f3f3f3; border-right: 1px solid #e0e0e0; padding-top: 1px; }
.views .on { width: 66px; font-weight: bold; font-size: 13px; background: #fafafa; margin-top: -1px; padding: 2px 6px 0 0; }

.status { height: 22px; display: flex; background: #f9f9f9; border-top: 1px solid #fff; font-size: 12px; flex: none; }
.status output { width: 220px; padding-left: 2px; background: #f0f0f0; line-height: 21px; }
.status button { width: 72px; background: #f0f0f0; color: #808080; border: solid #a0a0a0; border-width: 0 1px 0 0; }
.status .on { background: #e9ffdc; color: #0a62c4; border: 1px solid #fff; border-top: 2px solid #6f6f6f; border-left: 2px solid #6f6f6f; }
.status button:nth-of-type(7) { width: 81px; }
.status button:nth-of-type(8) { width: 75px; }
.status button:nth-of-type(12) { width: 66px; }
.status button:nth-of-type(13) { width: 64px; }
```

FILE: app.js
```js
var NS = "http://www.w3.org/2000/svg";

document.querySelectorAll("[data-icons]").forEach(function (strip) {
  strip.dataset.icons.split(" ").forEach(function (name) {
    var b = document.createElement("button");
    b.setAttribute("aria-label", name);
    b.innerHTML = '<svg><use href="#' + name + '"/></svg>';
    strip.appendChild(b);
  });
});

function path(id, d, cls) {
  var p = document.createElementNS(NS, "path");
  p.setAttribute("d", d);
  if (cls) p.setAttribute("class", cls);
  document.getElementById(id).appendChild(p);
}
function frame(id, x1, y1, x2, y2) {
  path(id, "M" + x1 + " " + y1 + "H" + x2 + "V" + y2 + "H" + x1 + "z", "frame");
}
function box(x, y, w, h) {
  return "M" + x + " " + y + "h" + w + "v" + h + "h-" + w + "z";
}
/* A bar of height 4 stands for lettering too small to plot: it is broken into specks. */
function bars(id, list) {
  path(id, list.map(function (b) {
    if (b[3] !== 4) return box(b[0], b[1], b[2], b[3]);
    var d = "";
    for (var x = 0, k = 0; x < b[2]; x += 6 + (k % 3) * 3, k++) {
      d += box(b[0] + x, b[1] + (k % 2) * 2, 4 + (k % 2) * 2, 3);
    }
    return d;
  }).join(""));
}
/* rows: [ruleY, leftY, leftH, leftW, rightY, rightH, rightW] */
function table(id, x1, y1, x2, y2, lx, rx, rows) {
  frame(id, x1, y1, x2, y2);
  rows.forEach(function (r) {
    path(id, "M" + x1 + " " + r[0] + "H" + x2, "frame");
    var b = [];
    if (r[3]) b.push([lx, r[1], r[3], r[2]]);
    if (r[6]) b.push([rx, r[4], r[6], r[5]]);
    bars(id, b);
  });
}

frame("sheet1", 22, 28, 1312, 592);
table("sheet1", 46, 109, 391, 427, 47, 246, [
  [133,141,9,64,141,9,60],[172,177,9,43,177,6,39],[191,195,9,40,195,9,47],[209,216,6,46,213,9,45],[227,234,6,31,231,9,30],[245,252,9,40,252,9,81],[263,270,9,19,270,6,63],[281,288,6,148,288,6,18],[300,309,6,49,306,6,9],[318,327,6,103,324,6,141],[336,342,9,49,342,9,63],[354,363,6,55,363,9,75],[374,384,6,64,381,9,84],[393,402,7,160,399,10,117],[410,420,6,166,417,9,120]
]);
bars("sheet1", [[246,156,60,9]]);
table("sheet1", 409, 109, 676, 485, 414, 507, [
  [133,141,9,60,144,9,129],[154,162,6,69,162,6,78],[172,177,11,63,180,6,30],[191,198,9,30,198,6,21],[209,216,9,33,219,6,30],[227,234,9,81,234,9,99],[245,252,6,30,252,9,48],[263,270,9,87,270,9,60],[281,288,9,54,288,9,72],[304,309,9,63,309,9,78],[318,327,6,42,324,9,75],[336,345,6,18,345,11,33],[354,363,6,24,363,9,42],[374,381,6,33,381,9,48],[393,399,10,39,399,10,51],[410,417,6,15,417,9,36],[428,432,9,21,435,9,42],[446,453,6,57,456,9,66],[465,471,9,24,474,9,39]
]);
table("sheet1", 694, 109, 961, 539, 699, 811, [
  [133,141,9,81,144,6,75],[154,160,4,62,159,6,54],[172,180,6,63,177,9,15],[191,195,9,81,195,9,57],[209,214,4,80,216,6,30],[227,232,4,72,234,6,63],[245,252,9,63,252,9,84],[263,270,9,45,270,9,66],[281,288,9,27,288,9,48],[300,306,9,30,306,9,54],[318,324,9,48,324,9,69],[336,342,9,186,342,9,60],[354,360,9,78,360,9,72],[374,0,0,0,0,0,0],[393,402,6,72,399,9,54],[410,417,9,60,420,6,57],[428,435,9,75,438,6,98],[446,456,6,78,453,9,62],[465,471,9,39,474,9,62],[483,489,9,36,492,9,56],[502,507,9,24,510,9,47],[521,525,6,21,528,10,44]
]);
table("sheet1", 979, 109, 1244, 502, 984, 1089, [
  [133,141,9,84,144,6,78],[154,162,6,63,162,9,150],[172,180,9,90,180,9,120],[191,195,9,66,195,9,84],[209,213,9,63,216,9,96],[227,231,9,45,234,9,90],[245,252,6,18,255,6,51],[263,270,9,21,270,9,51],[281,291,6,27,291,9,57],[304,312,6,60,309,9,87],[318,327,6,78,327,9,87],[336,345,9,69,345,9,87],[358,363,6,54,366,7,81],[374,384,6,93,381,9,114],[393,399,9,63,399,9,84],[410,417,9,102,420,6,96],[428,438,6,90,438,6,75],[446,453,9,33,453,11,63],[465,471,9,63,474,9,135],[483,489,9,96,489,11,126]
]);

frame("sheet2", 49, 28, 976, 643);
table("sheet2", 103, 109, 421, 613, 111, 267, [
  [137,141,9,81,144,9,81],[154,162,6,87,165,6,60],[173,177,9,78,183,6,60],[191,198,6,72,198,11,54],[211,216,9,24,219,9,57],[229,234,9,18,237,9,51],[247,252,9,63,255,9,99],[265,270,9,57,273,9,87],[283,291,6,69,294,8,153],[301,309,6,75,312,7,111],[319,324,9,108,330,7,126],[338,345,9,90,348,9,108],[357,360,9,111,366,9,138],[376,381,9,96,384,9,114],[394,399,9,93,402,9,144],[412,417,9,99,423,7,129],[430,435,9,93,441,7,123],[448,456,9,63,459,7,84],[466,474,9,84,474,9,87],[484,492,9,42,495,9,90],[505,510,9,57,510,9,90],[523,528,4,70,531,9,78],[541,550,4,134,549,9,84],[559,567,6,72,570,7,57],[578,585,6,30,588,7,57],[596,603,6,102,606,6,102]
]);
table("sheet2", 523, 109, 847, 613, 528, 714, [
  [137,144,9,81,144,9,78],[154,162,9,75,162,6,54],[175,180,9,72,180,6,66],[193,198,9,60,198,9,54],[211,219,6,75,216,9,54],[229,237,6,30,237,6,27],[247,255,6,48,252,9,45],[265,270,9,33,273,6,30],[283,291,6,45,288,9,42],[301,309,6,30,309,6,27],[319,327,9,84,327,9,129],[340,346,4,70,345,9,78],[358,363,9,33,363,9,30],[376,381,9,24,381,9,21],[394,402,6,102,402,6,99],[412,420,9,63,420,6,36],[430,438,9,177,438,9,66],[448,456,9,114,456,9,54],[466,474,4,90,474,9,60],[488,493,4,120,495,9,51],[505,511,4,120,513,9,75],[523,529,4,154,531,6,69],[541,549,6,87,549,6,66],[559,564,9,81,567,9,81],[580,585,9,138,585,9,93],[598,603,9,144,603,9,96]
]);

frame("sheet3", 31, 46, 668, 1000);
frame("sheet3", 106, 61, 653, 934);
bars("sheet3", [
  [105,570,549,6],[105,606,549,6],[342,582,75,9],[225,597,309,10],[618,597,33,10],[105,615,105,6],
  [105,798,549,6],[435,800,6,135],[105,867,332,6],[504,800,6,28],[570,800,6,28],[440,825,213,6],[543,828,6,30],[440,855,213,6],
  [107,807,55,6],[107,816,124,9],[107,828,40,6],[107,837,100,9],[107,849,43,3],[107,858,70,9],[107,876,40,6],[107,882,85,9],[107,897,19,3],[107,903,70,9],[107,915,43,6],[107,921,70,12],[107,939,55,3],
  [440,807,19,6],[456,816,33,9],[510,807,24,6],[576,807,18,6],[574,816,41,9],[440,837,25,3],[440,843,55,9],[549,837,18,3],[549,843,39,9],[440,861,70,6],
  [447,894,201,3],[492,900,111,9],[519,912,57,6],[537,918,21,6],[537,927,18,7]
]);
path("sheet3", "M609 78h3l2 14 10-4-4 12 22 4v4l-22 2 4 12-10-4-2 14h-3l-2-14-10 6 4-14-22-3v-3l22-4-3-12 9 4z");
path("sheet3", "M616 590l8-9 8 8 8-8 9 9M618 596l14-12 14 12", "frame");
path("sheet3", "M228 594h8v4h-8zM244 594h6v4h-6zM258 594h6v4h-6zM272 594h6v4h-6zM286 594h6v4h-6zM300 594h6v4h-6zM315 594h9v4h-9zM345 594h9v4h-9zM375 594h9v4h-9zM453 594h6v4h-6zM525 594h12v4h-12z");
```
